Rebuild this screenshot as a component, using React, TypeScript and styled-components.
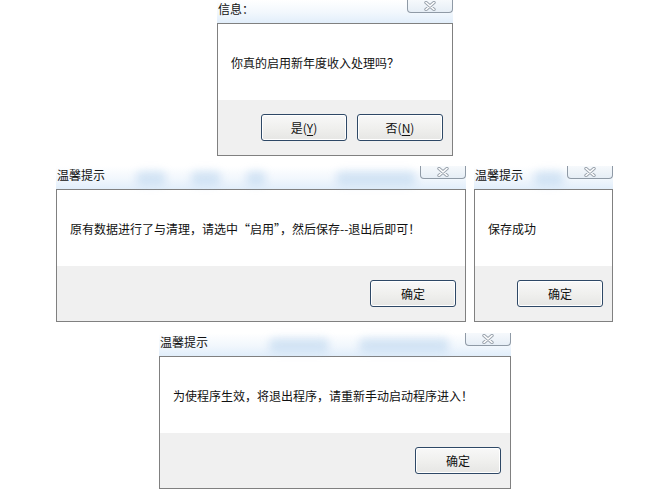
import React from 'react'
import styled, { createGlobalStyle } from 'styled-components'

const GlobalStyle = createGlobalStyle`
  html, body {
    margin: 0;
    padding: 0;
    background: #ffffff;
  }
  * {
    box-sizing: border-box;
  }
`

const Page = styled.div`
  width: 668px;
  height: 491px;
  overflow: hidden;
  background: #ffffff;
  display: flex;
  flex-direction: column;
  font-family: 'Noto Sans CJK SC', 'Noto Sans', sans-serif;
  font-size: 12px;
  color: #111;
`

const Row = styled.div<{ $left: number; $top: number }>`
  display: flex;
  gap: 8px;
  padding-left: ${({ $left }) => $left}px;
  margin-top: ${({ $top }) => $top}px;
`

const Window = styled.section<{ $width: number }>`
  position: relative;
  width: ${({ $width }) => $width}px;
  display: flex;
  flex-direction: column;
`

const Header = styled.div`
  position: relative;
  height: 23px;
  display: flex;
  align-items: flex-start;
  padding: 1px 0 0 1px;
  line-height: 16px;
  background: linear-gradient(
    180deg,
    rgba(255, 255, 255, 0) 0%,
    rgba(236, 244, 252, 0.7) 55%,
    rgba(222, 236, 250, 0.9) 100%
  );
`

const Glass = styled.span<{ $x: number; $w: number }>`
  position: absolute;
  left: ${({ $x }) => $x}px;
  top: 5px;
  width: ${({ $w }) => $w}px;
  height: 14px;
  border-radius: 6px;
  background: rgba(150, 190, 230, 0.35);
  filter: blur(4px);
`

const Title = styled.span`
  position: relative;
  color: #111;
`

const CloseButton = styled.div`
  position: absolute;
  top: 0;
  right: 0;
  width: 46px;
  height: 13px;
  border: 1px solid #8f9aa6;
  border-top: none;
  border-radius: 0 0 4px 4px;
  background: linear-gradient(180deg, #f6f9fc 0%, #e6eef6 100%);
  display: flex;
  align-items: center;
  justify-content: center;
  z-index: 2;
`

const Body = styled.div`
  border: 1px solid #808080;
  display: flex;
  flex-direction: column;
  background: #ffffff;
`

const Message = styled.div`
  height: 76px;
  display: flex;
  align-items: center;
  padding-left: 13px;
  white-space: nowrap;
`

const Footer = styled.div`
  height: 55px;
  background: #f0f0f0;
  display: flex;
  align-items: center;
  justify-content: flex-end;
  gap: 10px;
  padding-right: 9px;
`

const Button = styled.button`
  width: 86px;
  height: 27px;
  border: 1px solid #2e4866;
  border-radius: 3px;
  background: linear-gradient(180deg, #f8f8f8 0%, #f0f0ee 50%, #e6e6e4 100%);
  box-shadow: inset 0 0 0 1px #ffffff;
  font-family: inherit;
  font-size: 12px;
  color: #111;
  padding: 0;
  cursor: default;
`

const Key = styled.u`
  text-decoration-thickness: 1px;
  text-underline-offset: 2px;
`

function CloseIcon() {
  return (
    <svg width="14" height="10" viewBox="0 0 14 10">
      <path d="M3 1.5 L11 8.5 M11 1.5 L3 8.5" stroke="#9aa3ad" strokeWidth="3.4" strokeLinecap="round" />
      <path d="M3 1.5 L11 8.5 M11 1.5 L3 8.5" stroke="#ffffff" strokeWidth="1.6" strokeLinecap="round" />
    </svg>
  )
}

type DialogProps = {
  width: number
  title: string
  message: string
  glass?: Array<[number, number]>
  children: React.ReactNode
}

function Dialog({ width, title, message, glass = [], children }: DialogProps) {
  return (
    <Window $width={width}>
      <Header>
        {glass.map(([x, w]) => (
          <Glass key={x} $x={x} $w={w} />
        ))}
        <Title>{title}</Title>
        <CloseButton>
          <CloseIcon />
        </CloseButton>
      </Header>
      <Body>
        <Message>{message}</Message>
        <Footer>{children}</Footer>
      </Body>
    </Window>
  )
}

export default function App() {
  return (
    <>
      <GlobalStyle />
      <Page>
        <Row $left={217} $top={0}>
          <Dialog width={236} title="信息：" message="你真的启用新年度收入处理吗？">
            <Button>
              是(<Key>Y</Key>)
            </Button>
            <Button>
              否(<Key>N</Key>)
            </Button>
          </Dialog>
        </Row>
        <Row $left={56} $top={10}>
          <Dialog
            width={410}
            title="温馨提示"
            message="原有数据进行了与清理，请选中“启用”，然后保存--退出后即可！"
            glass={[
              [80, 30],
              [135, 30],
              [190, 20],
              [280, 80],
            ]}
          >
            <Button>确定</Button>
          </Dialog>
          <Dialog width={139} title="温馨提示" message="保存成功" glass={[[60, 30]]}>
            <Button>确定</Button>
          </Dialog>
        </Row>
        <Row $left={159} $top={11}>
          <Dialog
            width={352}
            title="温馨提示"
            message="为使程序生效，将退出程序，请重新手动启动程序进入！"
            glass={[
              [110, 60],
              [200, 90],
            ]}
          >
            <Button>确定</Button>
          </Dialog>
        </Row>
      </Page>
    </>
  )
}
